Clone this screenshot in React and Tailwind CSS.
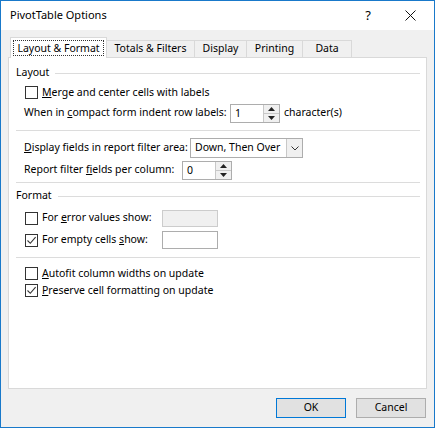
const font = { fontFamily: '"Noto Sans", "Open Sans", sans-serif' }

function Check({ checked }) {
  return (
    <span className="flex h-[13px] w-[13px] shrink-0 items-center justify-center border border-[#333333] bg-white">
      {checked && (
        <svg width="11" height="11" viewBox="0 0 11 11">
          <path d="M1.5 5.5 L4.3 8.3 L9.6 2.2" fill="none" stroke="#333333" strokeWidth="1.1" />
        </svg>
      )}
    </span>
  )
}

function Spinner({ value }) {
  return (
    <div className="flex h-[19px] w-[50px] border border-[#adadad] bg-white">
      <span className="flex-1 pl-[4px] leading-[17px]">{value}</span>
      <div className="flex w-[16px] flex-col border-l border-[#c8c8c8] bg-[#f0f0f0]">
        <span className="flex flex-1 items-center justify-center border-b border-[#c8c8c8]">
          <svg width="7" height="4" viewBox="0 0 7 4"><path d="M0 4 L3.5 0 L7 4Z" fill="#222" /></svg>
        </span>
        <span className="flex flex-1 items-center justify-center">
          <svg width="7" height="4" viewBox="0 0 7 4"><path d="M0 0 L3.5 4 L7 0Z" fill="#222" /></svg>
        </span>
      </div>
    </div>
  )
}

function Sep({ h, top }) {
  return (
    <div className={`${h} pr-[6px]`}>
      <div className={`${top} h-px bg-[#dcdcdc]`} />
    </div>
  )
}

function Group({ label }) {
  return (
    <div className="flex h-[18px] items-center gap-[6px] pr-[6px]">
      <span>{label}</span>
      <div className="h-px flex-1 bg-[#dcdcdc]" />
    </div>
  )
}

function CheckRow({ checked, children, h }) {
  return (
    <div className={`flex ${h} items-center pl-[9px]`}>
      <Check checked={checked} />
      <span className="ml-[4px]">{children}</span>
    </div>
  )
}

const tabs = [
  { label: 'Totals & Filters', w: 'w-[88px]' },
  { label: 'Display', w: 'w-[52px]' },
  { label: 'Printing', w: 'w-[56px]' },
  { label: 'Data', w: 'w-[49px]' },
]

export default function App() {
  return (
    <div
      style={font}
      className="flex h-[428px] w-[435px] flex-col whitespace-nowrap border border-[#1979ca] bg-[#f0f0f0] text-[10.5px] text-black"
    >
      <div className="flex h-[29px] shrink-0 items-center bg-white pl-[9px]">
        <span className="text-[11px]">PivotTable Options</span>
        <span className="ml-auto mr-[34px] text-[13px]">?</span>
        <svg className="mr-[18px]" width="11" height="11" viewBox="0 0 11 11">
          <path d="M0.5 0.5 L10.5 10.5 M10.5 0.5 L0.5 10.5" stroke="#111" strokeWidth="1" />
        </svg>
      </div>

      <div className="flex h-[27px] shrink-0 items-end pl-[9px]">
        <div className="relative z-10 -mb-px flex h-[21px] w-[97px] items-center justify-center border border-b-0 border-[#d9d9d9] bg-white">
          <span className="border border-dotted border-[#333] px-[3px] leading-[14px]">Layout &amp; Format</span>
        </div>
        {tabs.map((t) => (
          <div
            key={t.label}
            className={`flex h-[17px] ${t.w} items-center justify-center border border-b-0 border-l-0 border-[#d9d9d9] bg-[#f0f0f0]`}
          >
            {t.label}
          </div>
        ))}
      </div>

      <div className="mx-[7px] flex h-[332px] shrink-0 flex-col border border-[#d9d9d9] bg-white pl-[7px] pt-[6px]">
        <Group label="Layout" />
        <CheckRow h="h-[21px]">
          <u>M</u>erge and center cells with labels
        </CheckRow>
        <div className="flex h-[20px] items-center pl-[8px]">
          <span className="w-[206px]">
            When in <u>c</u>ompact form indent row labels:
          </span>
          <Spinner value="1" />
          <span className="ml-[4px]">character(s)</span>
        </div>
        <Sep h="h-[15px]" top="mt-[7px]" />
        <div className="flex h-[20px] items-center pl-[8px]">
          <span className="w-[166px]">
            <u>D</u>isplay fields in report filter area:
          </span>
          <div className="flex h-[20px] w-[113px] items-center border border-[#adadad] bg-white">
            <span className="flex-1 pl-[4px]">Down, Then Over</span>
            <span className="flex h-full w-[16px] items-center justify-center border-l border-[#c8c8c8] bg-[#f0f0f0]">
              <svg width="8" height="5" viewBox="0 0 8 5"><path d="M0.5 0.5 L4 4 L7.5 0.5" fill="none" stroke="#333" strokeWidth="1" /></svg>
            </span>
          </div>
        </div>
        <div className="flex h-[22px] items-center pl-[8px] pt-[2px]">
          <span className="w-[158px]">
            Report filter <u>f</u>ields per column:
          </span>
          <Spinner value="0" />
        </div>
        <Sep h="h-[7px]" top="mt-[2px]" />
        <Group label="Format" />
        <div className="flex h-[22px] items-center pl-[9px] pt-[4px]">
          <Check />
          <span className="ml-[4px] w-[120px]">
            For <u>e</u>rror values show:
          </span>
          <div className="h-[17px] w-[56px] border border-[#cccccc] bg-[#f0f0f0]" />
        </div>
        <div className="flex h-[22px] items-center pl-[9px] pt-[4px]">
          <Check checked />
          <span className="ml-[4px] w-[120px]">
            For empty cells <u>s</u>how:
          </span>
          <div className="h-[18px] w-[56px] border border-[#adadad] bg-white" />
        </div>
        <Sep h="h-[16px]" top="mt-[8px]" />
        <CheckRow h="h-[17px]">
          <u>A</u>utofit column widths on update
        </CheckRow>
        <CheckRow checked h="h-[17px]">
          <u>P</u>reserve cell formatting on update
        </CheckRow>
      </div>

      <div className="flex flex-1 items-center justify-end gap-[10px] pr-[8px] pb-[1px]">
        <button className="h-[20px] w-[70px] border border-[#0078d7] bg-[#e1e1e1] text-[10.5px]">OK</button>
        <button className="h-[20px] w-[70px] border border-[#adadad] bg-[#e1e1e1] text-[10.5px]">Cancel</button>
      </div>
    </div>
  )
}
